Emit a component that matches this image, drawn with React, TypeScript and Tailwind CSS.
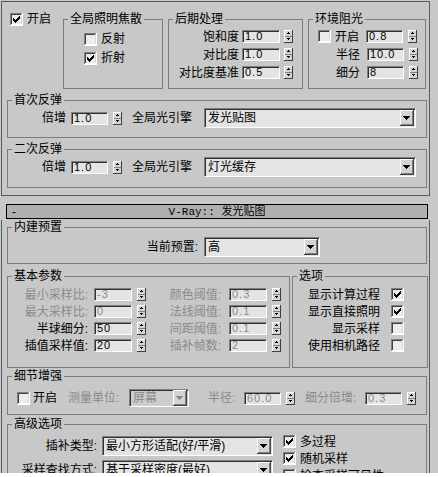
import React from 'react';

const dimText = 'text-[#8a8a8a]';

function Check({ on }: { on?: boolean }) {
  return (
    <svg width="13" height="13" viewBox="0 0 13 13" shapeRendering="crispEdges" className="shrink-0">
      <rect x="0" y="0" width="13" height="13" fill="#ffffff" />
      <path d="M0 0H12V1H1V12H0Z" fill="#808080" />
      <path d="M1 1H11V2H2V11H1Z" fill="#404040" />
      <path d="M1 11H12V1H11V11Z" fill="#d8d8d8" />
      <rect x="2" y="2" width="9" height="9" fill="#ececec" />
      {on && (
        <path
          d="M9 3h1v1h-1z M8 4h2v1h-2z M3 5h1v1h-1z M7 5h3v1h-3z M3 6h2v1h-2z M6 6h3v1h-3z M3 7h5v1h-5z M4 8h3v1h-3z M5 9h1v1h-1z"
          fill="#000000"
        />
      )}
    </svg>
  );
}

function Spin() {
  return (
    <svg width="9" height="13" viewBox="0 0 9 13" shapeRendering="crispEdges" className="shrink-0">
      <rect x="0" y="0" width="9" height="13" fill="#404040" />
      <rect x="0" y="0" width="8" height="12" fill="#ffffff" />
      <rect x="1" y="1" width="7" height="11" fill="#d4d4d4" />
      <rect x="1" y="6" width="7" height="1" fill="#808080" />
      <path d="M4 2h1v1h-1z M3 3h3v1h-3z" fill="#000000" />
      <path d="M3 8h3v1h-3z M4 9h1v1h-1z" fill="#000000" />
    </svg>
  );
}

function Field({ value, w, dim }: { value: string; w: string; dim?: boolean }) {
  return (
    <div
      className={`${w} h-[13px] shrink-0 border border-t-[#808080] border-l-[#808080] border-b-white border-r-white bg-[#e4e4e4] pl-[2px] font-['Liberation_Sans',sans-serif] text-[11px] leading-[11px] tracking-[1px] shadow-[inset_1px_1px_0_#303030] ${dim ? dimText : 'text-black'}`}
    >
      {value}
    </div>
  );
}

function Arrow({ dim }: { dim?: boolean }) {
  return (
    <svg width="14" height="16" viewBox="0 0 14 16" shapeRendering="crispEdges" className="shrink-0">
      <rect x="0" y="0" width="14" height="16" fill="#404040" />
      <rect x="0" y="0" width="13" height="15" fill="#ffffff" />
      <rect x="1" y="1" width="12" height="14" fill="#808080" />
      <rect x="1" y="1" width="11" height="13" fill="#d4d4d4" />
      <path d="M3 6h7v1h-7z M4 7h5v1h-5z M5 8h3v1h-3z M6 9h1v1h-1z" fill={dim ? '#8a8a8a' : '#000000'} />
    </svg>
  );
}

function Drop({ text, w, dim, h = 'h-[20px]' }: { text: string; w: string; dim?: boolean; h?: string }) {
  return (
    <div
      className={`${w} ${h} flex shrink-0 items-center border border-t-[#808080] border-l-[#808080] border-b-white border-r-white pl-[3px] pr-[1px] shadow-[inset_1px_1px_0_#303030] ${dim ? 'bg-[#cdcdcd] text-[#8a8a8a]' : 'bg-[#e4e4e4] text-black'}`}
    >
      <span className="flex-1 truncate">{text}</span>
      <Arrow dim={dim} />
    </div>
  );
}

function Group({ title, className, children }: { title: string; className: string; children?: React.ReactNode }) {
  return (
    <fieldset className={`shrink-0 border border-[#7c7c7c] ${className}`}>
      <legend className="ml-[4px] px-[2px] text-[12px] leading-[14px]">{title}</legend>
      {children}
    </fieldset>
  );
}

function SpinRow({ label, value, labelW }: { label: string; value: string; labelW: string }) {
  return (
    <div className="flex h-[13px] items-center justify-end">
      <span className={`${labelW} text-right`}>{label}</span>
      <div className="ml-[3px]">
        <Field value={value} w="w-[38px]" />
      </div>
      <div className="ml-[4px]">
        <Spin />
      </div>
    </div>
  );
}

const basic = [
  { l: '最小采样比:', v: '-3', dim: true, r: '颜色阈值:', rv: '0.3' },
  { l: '最大采样比:', v: '0', dim: true, r: '法线阈值:', rv: '0.1' },
  { l: '半球细分:', v: '50', dim: false, r: '间距阈值:', rv: '0.1' },
  { l: '插值采样值:', v: '20', dim: false, r: '插补帧数:', rv: '2' },
];

const options = [
  { l: '显示计算过程', on: true },
  { l: '显示直接照明', on: true },
  { l: '显示采样', on: false },
  { l: '使用相机路径', on: false },
];

export default function App() {
  return (
    <div className="h-[473px] w-[438px] overflow-hidden bg-[#c8c8c8] font-['Liberation_Sans','Noto_Sans_CJK_SC',sans-serif] text-[12px] leading-[14px] text-black">
      {/* 全局照明 rollout */}
      <div className="ml-[1px] mt-[1px] h-[195px] w-[429px] border border-[#5a5a5a] pl-[5px] pt-[10px]">
        <div className="flex items-start">
          <div className="flex w-[56px] shrink-0 items-center gap-[4px] pl-[3px]">
            <Check on />
            <span>开启</span>
          </div>
          <Group title="全局照明焦散" className="h-[77px] w-[100px]">
            <div className="flex flex-col gap-[5px] pl-[20px] pt-[6px]">
              <div className="flex items-center gap-[4px]">
                <Check />
                <span>反射</span>
              </div>
              <div className="flex items-center gap-[4px]">
                <Check on />
                <span>折射</span>
              </div>
            </div>
          </Group>
          <Group title="后期处理" className="ml-[5px] h-[77px] w-[134px]">
            <div className="flex flex-col gap-[5px] pr-[9px] pt-[4px]">
              <SpinRow label="饱和度" value="1.0" labelW="w-[70px]" />
              <SpinRow label="对比度" value="1.0" labelW="w-[70px]" />
              <SpinRow label="对比度基准" value="0.5" labelW="w-[70px]" />
            </div>
          </Group>
          <Group title="环境阻光" className="ml-[5px] h-[77px] w-[118px]">
            <div className="flex flex-col gap-[5px] pl-[9px] pr-[7px] pt-[4px]">
              <div className="flex h-[13px] items-center">
                <Check />
                <span className="ml-[4px] w-[31px]">开启</span>
                <Field value="0.8" w="w-[37px]" />
                <div className="ml-[5px]">
                  <Spin />
                </div>
              </div>
              <div className="flex h-[13px] items-center justify-end">
                <span className="mr-[7px]">半径</span>
                <Field value="10.0" w="w-[37px]" />
                <div className="ml-[5px]">
                  <Spin />
                </div>
              </div>
              <div className="flex h-[13px] items-center justify-end">
                <span className="mr-[7px]">细分</span>
                <Field value="8" w="w-[37px]" />
                <div className="ml-[5px]">
                  <Spin />
                </div>
              </div>
            </div>
          </Group>
        </div>

        <Group title="首次反弹" className="mt-[4px] h-[45px] w-[420px]">
          <div className="mt-[1px] flex h-[20px] items-center pl-[34px]">
            <span className="w-[24px]">倍增</span>
            <div className="ml-[5px]">
              <Field value="1.0" w="w-[37px]" />
            </div>
            <div className="ml-[5px]">
              <Spin />
            </div>
            <span className="ml-[10px] w-[60px]">全局光引擎</span>
            <div className="ml-[12px]">
              <Drop text="发光贴图" w="w-[212px]" />
            </div>
          </div>
        </Group>

        <Group title="二次反弹" className="mt-[4px] h-[46px] w-[420px]">
          <div className="mt-[1px] flex h-[20px] items-center pl-[34px]">
            <span className="w-[24px]">倍增</span>
            <div className="ml-[5px]">
              <Field value="1.0" w="w-[37px]" />
            </div>
            <div className="ml-[5px]">
              <Spin />
            </div>
            <span className="ml-[10px] w-[60px]">全局光引擎</span>
            <div className="ml-[12px]">
              <Drop text="灯光缓存" w="w-[212px]" />
            </div>
          </div>
        </Group>
      </div>

      {/* rollout title */}
      <div className="ml-[6px] mt-[8px] flex h-[15px] w-[422px] items-center border border-black bg-[#b0b0b0]">
        <span className="w-[24px] pl-[5px] leading-[12px]">-</span>
        <span className="flex-1 text-center leading-[12px]">
          <span className="font-['Liberation_Mono',monospace] text-[11px]">V-Ray:: </span>
          <span className="text-[11px]">发光贴图</span>
        </span>
        <span className="w-[24px]" />
      </div>

      {/* 发光贴图 rollout */}
      <div className="ml-[1px] h-[260px] w-[429px] border-x border-[#5a5a5a] pl-[5px]">
        <Group title="内建预置" className="mt-[1px] h-[44px] w-[420px]">
          <div className="mt-[3px] flex h-[20px] items-center">
            <span className="w-[190px] text-right">当前预置:</span>
            <div className="ml-[6px]">
              <Drop text="高" w="w-[116px]" />
            </div>
          </div>
        </Group>

        <div className="mt-[5px] flex">
          <Group title="基本参数" className="h-[99px] w-[283px]">
            <div className="pt-[3px]">
              {basic.map((r) => (
                <div key={r.l} className="flex h-[17px] items-center">
                  <span className={`w-[80px] text-right ${r.dim ? dimText : ''}`}>{r.l}</span>
                  <div className="ml-[6px]">
                    <Field value={r.v} w="w-[38px]" dim={r.dim} />
                  </div>
                  <div className="ml-[5px]">
                    <Spin />
                  </div>
                  <span className={`w-[75px] text-right ${dimText}`}>{r.r}</span>
                  <div className="ml-[8px]">
                    <Field value={r.rv} w="w-[38px]" dim />
                  </div>
                  <div className="ml-[5px]">
                    <Spin />
                  </div>
                </div>
              ))}
            </div>
          </Group>
          <Group title="选项" className="ml-[2px] h-[99px] w-[136px]">
            <div className="pt-[3px]">
              {options.map((o) => (
                <div key={o.l} className="flex h-[17px] items-center">
                  <span className="w-[87px] text-right">{o.l}</span>
                  <div className="ml-[11px]">
                    <Check on={o.on} />
                  </div>
                </div>
              ))}
            </div>
          </Group>
        </div>

        <Group title="细节增强" className="mt-[1px] h-[46px] w-[420px]">
          <div className="mt-[5px] flex h-[20px] items-center pl-[9px]">
            <Check />
            <span className="ml-[3px] w-[24px]">开启</span>
            <span className={`ml-[11px] w-[55px] ${dimText}`}>测量单位:</span>
            <div className="ml-[6px]">
              <Drop text="屏幕" w="w-[60px]" h="h-[18px]" dim />
            </div>
            <span className={`ml-[19px] w-[28px] ${dimText}`}>半径:</span>
            <div className="ml-[8px]">
              <Field value="60.0" w="w-[37px]" dim />
            </div>
            <div className="ml-[5px]">
              <Spin />
            </div>
            <span className={`ml-[10px] w-[55px] ${dimText}`}>细分倍增:</span>
            <div className="ml-[5px]">
              <Field value="0.3" w="w-[37px]" dim />
            </div>
            <div className="ml-[5px]">
              <Spin />
            </div>
          </div>
        </Group>

        <Group title="高级选项" className="mt-[2px] h-[90px] w-[420px]">
          <div className="flex">
            <div className="flex flex-col gap-[4px] pt-[5px]">
              <div className="flex h-[20px] items-center">
                <span className="w-[89px] text-right">插补类型:</span>
                <div className="ml-[5px]">
                  <Drop text="最小方形适配(好/平滑)" w="w-[171px]" />
                </div>
              </div>
              <div className="flex h-[20px] items-center">
                <span className="w-[89px] text-right">采样查找方式:</span>
                <div className="ml-[5px]">
                  <Drop text="基于采样密度(最好)" w="w-[171px]" />
                </div>
              </div>
            </div>
            <div className="ml-[10px] flex flex-col pt-[2px]">
              <div className="flex h-[17px] items-center gap-[4px]">
                <Check on />
                <span>多过程</span>
              </div>
              <div className="flex h-[17px] items-center gap-[4px]">
                <Check on />
                <span>随机采样</span>
              </div>
              <div className="flex h-[17px] items-center gap-[4px]">
                <Check />
                <span>检查采样可见性</span>
              </div>
            </div>
          </div>
        </Group>
      </div>
    </div>
  );
}
